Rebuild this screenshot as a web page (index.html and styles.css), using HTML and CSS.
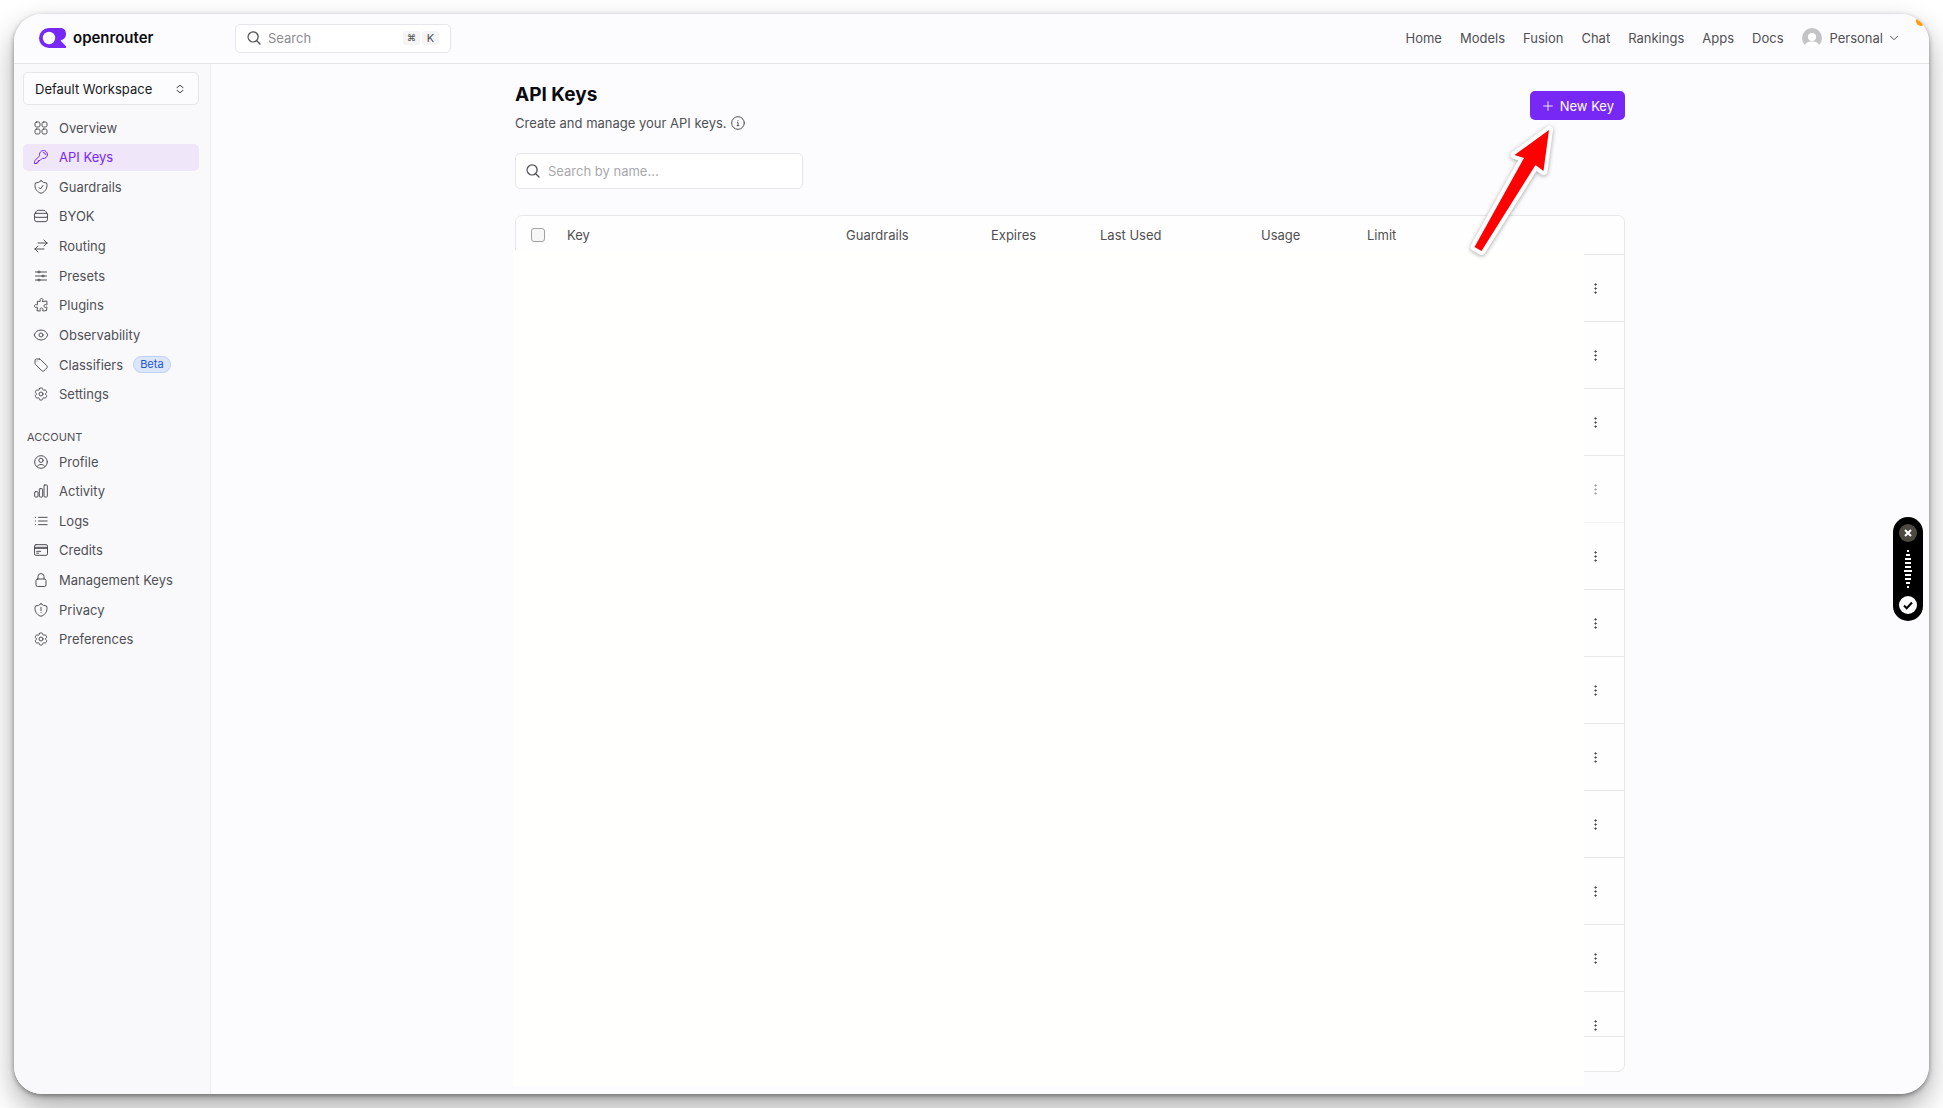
FILE: index.html
```
<!DOCTYPE html>
<html lang="en">
<head>
    <meta charset="UTF-8">
    <meta name="viewport" content="width=device-width, initial-scale=1.0">
    <title>API Keys | OpenRouter</title>
    <link rel="stylesheet" href="styles.css">
</head>
<body>
    <svg class="sprite" aria-hidden="true">
        <symbol id="i-search" viewBox="0 0 24 24"><path d="m21 21-5.2-5.2m0 0A7.5 7.5 0 1 0 5.2 5.2a7.5 7.5 0 0 0 10.6 10.6Z"/></symbol>
        <symbol id="i-grid" viewBox="0 0 24 24"><rect x="3" y="3" width="7.5" height="7.5" rx="2.5"/><rect x="13.5" y="3" width="7.5" height="7.5" rx="2.5"/><rect x="3" y="13.5" width="7.5" height="7.5" rx="2.5"/><rect x="13.5" y="13.5" width="7.5" height="7.5" rx="2.5"/></symbol>
        <symbol id="i-key" viewBox="0 0 24 24"><path d="M15.75 5.25a3 3 0 0 1 3 3m3 0a6 6 0 0 1-7.029 5.912c-.563-.097-1.159.026-1.563.43L10.5 17.25H8.25v2.25H6v2.25H2.25v-2.818c0-.597.237-1.17.659-1.591l6.499-6.499c.404-.404.527-1 .43-1.563A6 6 0 1 1 21.75 8.25Z"/></symbol>
        <symbol id="i-shield-check" viewBox="0 0 24 24"><path d="M9 12.75 11.25 15 15 9.75M12 2.7A12 12 0 0 1 3.6 6 12 12 0 0 0 3 9.75c0 5.6 3.8 10.3 9 11.6 5.2-1.3 9-6 9-11.6 0-1.3-.2-2.6-.6-3.75h-.15A12 12 0 0 1 12 2.7Z"/></symbol>
        <symbol id="i-shield-alert" viewBox="0 0 24 24"><path d="M12 8v5m0 2.7v.1M12 2.7A12 12 0 0 1 3.6 6 12 12 0 0 0 3 9.75c0 5.6 3.8 10.3 9 11.6 5.2-1.3 9-6 9-11.6 0-1.3-.2-2.6-.6-3.75h-.15A12 12 0 0 1 12 2.7Z"/></symbol>
        <symbol id="i-stack" viewBox="0 0 24 24"><path d="M2.300 9.500 4.500 5.500A4 4 0 0 1 8 3.500h8a4 4 0 0 1 3.500 2l2.200 4M4.500 8h15a2.300 2.300 0 0 1 2.300 2.300v1.400A2.300 2.300 0 0 1 19.500 14h-15a2.300 2.300 0 0 1-2.300-2.300v-1.400A2.300 2.300 0 0 1 4.500 8ZM2.300 12v5A3.500 3.500 0 0 0 5.800 20.500h12.400a3.500 3.500 0 0 0 3.500-3.500v-5"/></symbol>
        <symbol id="i-swap" viewBox="0 0 24 24"><path d="M7.5 21 3 16.5m0 0L7.5 12M3 16.5h13.5m0-13.5L21 7.5m0 0L16.5 12M21 7.5H7.5"/></symbol>
        <symbol id="i-sliders" viewBox="0 0 24 24"><path d="M10.5 6h9.75M10.5 6a1.5 1.5 0 1 1-3 0m3 0a1.5 1.5 0 1 0-3 0M3.75 6H7.5m3 12h9.75m-9.75 0a1.5 1.5 0 0 1-3 0m3 0a1.5 1.5 0 0 0-3 0m-3.75 0H7.5m9-6h3.75m-3.75 0a1.5 1.5 0 0 1-3 0m3 0a1.5 1.5 0 0 0-3 0m-9.75 0h9.75"/></symbol>
        <symbol id="i-puzzle" viewBox="0 0 24 24"><path d="M14.25 6.087c0-.355.186-.676.401-.959.221-.29.349-.634.349-1.003 0-1.036-1.007-1.875-2.25-1.875s-2.25.84-2.25 1.875c0 .369.128.713.349 1.003.215.283.401.604.401.959v0a.64.64 0 0 1-.657.643 48.39 48.39 0 0 1-4.163-.3c.186 1.613.293 3.25.315 4.907a.656.656 0 0 1-.658.663v0c-.355 0-.676-.186-.959-.401a1.647 1.647 0 0 0-1.003-.349c-1.036 0-1.875 1.007-1.875 2.25s.84 2.25 1.875 2.25c.369 0 .713-.128 1.003-.349.283-.215.604-.401.959-.401v0c.31 0 .555.26.532.57a48.039 48.039 0 0 1-.642 5.056c1.518.19 3.058.309 4.616.354a.64.64 0 0 0 .657-.643v0c0-.355-.186-.676-.401-.959a1.647 1.647 0 0 1-.349-1.003c0-1.035 1.008-1.875 2.25-1.875 1.243 0 2.25.84 2.25 1.875 0 .369-.128.713-.349 1.003-.215.283-.4.604-.4.959v0c0 .333.277.599.61.58a48.1 48.1 0 0 0 5.427-.63 48.05 48.05 0 0 0 .582-4.717.532.532 0 0 0-.533-.57v0c-.355 0-.676.186-.959.401-.29.221-.634.349-1.003.349-1.035 0-1.875-1.007-1.875-2.25s.84-2.25 1.875-2.25c.37 0 .713.128 1.003.349.283.215.604.401.96.401v0a.656.656 0 0 0 .658-.663 48.422 48.422 0 0 0-.37-5.36c-1.886.342-3.81.574-5.766.689a.578.578 0 0 1-.61-.58v0Z"/></symbol>
        <symbol id="i-eye" viewBox="0 0 24 24"><path d="M2 12.3a1 1 0 0 1 0-.6C3.4 7.5 7.4 4.5 12 4.5s8.6 3 10 7.200c.1.2.1.4 0 .6-1.4 4.200-5.4 7.200-10 7.200s-8.600-3-10-7.200Z"/><circle cx="12" cy="12" r="3"/></symbol>
        <symbol id="i-tag" viewBox="0 0 24 24"><path d="M9.6 3H5.25A2.25 2.25 0 0 0 3 5.25v4.300c0 .6.2 1.200.7 1.600l9.600 9.600c.7.7 1.800.9 2.600.3a18 18 0 0 0 5.200-5.200c.6-.8.4-1.900-.3-2.600l-9.600-9.600A2.200 2.200 0 0 0 9.600 3Z"/><path d="M6 6h.01"/></symbol>
        <symbol id="i-cog" viewBox="0 0 24 24"><path d="M9.594 3.94c.09-.542.56-.94 1.11-.94h2.593c.55 0 1.02.398 1.11.94l.213 1.281c.063.374.313.686.645.87.074.04.147.083.22.127.325.196.72.257 1.075.124l1.217-.456a1.125 1.125 0 0 1 1.37.49l1.296 2.247a1.125 1.125 0 0 1-.26 1.431l-1.003.827c-.293.241-.438.613-.43.992a7.723 7.723 0 0 1 0 .255c-.008.378.137.75.43.991l1.004.827c.424.35.534.955.26 1.43l-1.298 2.247a1.125 1.125 0 0 1-1.369.491l-1.217-.456c-.355-.133-.75-.072-1.076.124a6.47 6.47 0 0 1-.22.128c-.331.183-.581.495-.644.869l-.213 1.281c-.09.543-.56.94-1.11.94h-2.594c-.55 0-1.019-.398-1.11-.94l-.213-1.281c-.062-.374-.312-.686-.644-.87a6.52 6.52 0 0 1-.22-.127c-.325-.196-.72-.257-1.076-.124l-1.217.456a1.125 1.125 0 0 1-1.369-.49l-1.297-2.247a1.125 1.125 0 0 1 .26-1.431l1.004-.827c.292-.24.437-.613.43-.991a6.932 6.932 0 0 1 0-.255c.007-.38-.138-.751-.43-.992l-1.004-.827a1.125 1.125 0 0 1-.26-1.43l1.297-2.247a1.125 1.125 0 0 1 1.37-.491l1.216.456c.356.133.751.072 1.076-.124.072-.044.146-.086.22-.128.332-.183.582-.495.644-.869l.214-1.28Z"/><circle cx="12" cy="12" r="3"/></symbol>
        <symbol id="i-user" viewBox="0 0 24 24"><circle cx="12" cy="12" r="9.5"/><circle cx="12" cy="9.5" r="3.2"/><path d="M6 18.8a7 7 0 0 1 12 0"/></symbol>
        <symbol id="i-chart" viewBox="0 0 24 24"><rect x="2.5" y="13" width="5" height="8" rx="1.2"/><rect x="9.5" y="8.5" width="5" height="12.5" rx="1.2"/><rect x="16.5" y="3" width="5" height="18" rx="1.2"/></symbol>
        <symbol id="i-list" viewBox="0 0 24 24"><path d="M8.25 6.5h13M8.25 12h13m-13 5.5h13M3.5 6.5h.5M3.5 12h.5m-.5 5.5h.5"/></symbol>
        <symbol id="i-card" viewBox="0 0 24 24"><rect x="2.25" y="4" width="19.5" height="16" rx="2.25"/><path d="M2.25 8h19.5M2.25 9.5h19.5M5.5 14h6m-6 2.7h3"/></symbol>
        <symbol id="i-lock" viewBox="0 0 24 24"><rect x="4.5" y="10.5" width="15" height="11.2" rx="2.25"/><path d="M7.5 10.5V6.75a4.5 4.5 0 0 1 9 0v3.75"/></symbol>
        <symbol id="i-info" viewBox="0 0 24 24"><circle cx="12" cy="12" r="9.5"/><path d="M11 11h1v5m-1.3 0h2.6M12 8v.1"/></symbol>
        <symbol id="i-plus" viewBox="0 0 24 24"><path d="M12 4.5v15m7.5-7.5h-15"/></symbol>
        <symbol id="i-down" viewBox="0 0 24 24"><path d="m5 8.500 7 7 7-7"/></symbol>
        <symbol id="i-updown" viewBox="0 0 24 24"><path d="M5 9V8.5L12 3l7 5.500V9M5 15v.5l7 5.500 7-5.500V15"/></symbol>
        <symbol id="i-dots" viewBox="0 0 24 24"><circle cx="12" cy="5.5" r="1.2"/><circle cx="12" cy="12" r="1.2"/><circle cx="12" cy="18.5" r="1.2"/></symbol>
    </svg>

    <div class="window">
        <header class="topbar">
            <a class="logo" href="#">
                <svg class="logo-mark" viewBox="0 0 27 20" aria-hidden="true">
                    <path d="M10 0H21.5C25 0 27 2.5 27 6.2C27 9.500 25 11.5 21.5 12.5L27 18.2V20H10A10 10 0 0 1 10 0Z" fill="#7728f5"/>
                    <circle cx="10" cy="10" r="6.2" fill="#fcfcff"/>
                </svg>
                <span class="logo-text">openrouter</span>
            </a>
            <label class="search top-search">
                <svg class="icon"><use href="#i-search"/></svg>
                <input type="search" placeholder="Search" aria-label="Search">
                <kbd class="mac">⌘</kbd><kbd>K</kbd>
            </label>
            <nav class="top-nav">
                <a href="#">Home</a>
                <a href="#">Models</a>
                <a href="#">Fusion</a>
                <a href="#">Chat</a>
                <a href="#">Rankings</a>
                <a href="#">Apps</a>
                <a href="#">Docs</a>
            </nav>
            <button class="account">
                <svg class="avatar" viewBox="0 0 20 20" aria-hidden="true">
                    <circle cx="10" cy="10" r="10" fill="#c4c4c6"/>
                    <circle cx="10" cy="9" r="4" fill="#fff"/>
                    <path d="M3 17.2C4 14 7 13.5 10 13.5s6 .5 7 3.700A10 10 0 0 1 3 17.200Z" fill="#fff"/>
                </svg>
                Personal
                <svg class="icon chevron"><use href="#i-down"/></svg>
            </button>
        </header>

        <div class="body">
            <aside class="sidebar">
                <button class="workspace">Default Workspace <svg class="icon"><use href="#i-updown"/></svg></button>
                <nav class="side-nav main-nav">
                    <a href="#"><svg class="icon"><use href="#i-grid"/></svg>Overview</a>
                    <a href="#" class="active"><svg class="icon"><use href="#i-key"/></svg>API Keys</a>
                    <a href="#"><svg class="icon"><use href="#i-shield-check"/></svg>Guardrails</a>
                    <a href="#"><svg class="icon"><use href="#i-stack"/></svg>BYOK</a>
                    <a href="#"><svg class="icon"><use href="#i-swap"/></svg>Routing</a>
                    <a href="#"><svg class="icon"><use href="#i-sliders"/></svg>Presets</a>
                    <a href="#"><svg class="icon"><use href="#i-puzzle"/></svg>Plugins</a>
                    <a href="#"><svg class="icon"><use href="#i-eye"/></svg>Observability</a>
                    <a href="#"><svg class="icon"><use href="#i-tag"/></svg>Classifiers <span class="badge">Beta</span></a>
                    <a href="#"><svg class="icon"><use href="#i-cog"/></svg>Settings</a>
                </nav>
                <h2 class="side-title">ACCOUNT</h2>
                <nav class="side-nav account-nav">
                    <a href="#"><svg class="icon"><use href="#i-user"/></svg>Profile</a>
                    <a href="#"><svg class="icon"><use href="#i-chart"/></svg>Activity</a>
                    <a href="#"><svg class="icon"><use href="#i-list"/></svg>Logs</a>
                    <a href="#"><svg class="icon"><use href="#i-card"/></svg>Credits</a>
                    <a href="#"><svg class="icon"><use href="#i-lock"/></svg>Management Keys</a>
                    <a href="#"><svg class="icon"><use href="#i-shield-alert"/></svg>Privacy</a>
                    <a href="#"><svg class="icon"><use href="#i-cog"/></svg>Preferences</a>
                </nav>
            </aside>

            <main class="content">
                <div class="page-head">
                    <div>
                        <h1>API Keys</h1>
                        <p class="subtitle">Create and manage your API keys. <svg class="icon"><use href="#i-info"/></svg></p>
                    </div>
                    <button class="new-key"><svg class="icon"><use href="#i-plus"/></svg>New Key</button>
                </div>
                <label class="search name-search">
                    <svg class="icon"><use href="#i-search"/></svg>
                    <input type="search" placeholder="Search by name..." aria-label="Search by name">
                </label>
                <div class="table-area">
                    <div class="card">
                        <div class="table-wrap">
                            <table>
                                <colgroup>
                                    <col class="c-check"><col class="c-key"><col class="c-guard"><col class="c-expires">
                                    <col class="c-last"><col class="c-usage"><col><col class="c-menu">
                                </colgroup>
                                <thead>
                                    <tr>
                                        <th class="check"><input type="checkbox" aria-label="Select all"></th>
                                        <th>Key</th>
                                        <th>Guardrails</th>
                                        <th>Expires</th>
                                        <th>Last Used</th>
                                        <th>Usage</th>
                                        <th>Limit</th>
                                        <th></th>
                                    </tr>
                                </thead>
                                <tbody>
                                    <tr><td colspan="7"></td><td class="menu"><button aria-label="Key menu"><svg class="icon"><use href="#i-dots"/></svg></button></td></tr>
                                    <tr><td colspan="7"></td><td class="menu"><button aria-label="Key menu"><svg class="icon"><use href="#i-dots"/></svg></button></td></tr>
                                    <tr><td colspan="7"></td><td class="menu"><button aria-label="Key menu"><svg class="icon"><use href="#i-dots"/></svg></button></td></tr>
                                    <tr class="disabled"><td colspan="7"></td><td class="menu"><button aria-label="Key menu"><svg class="icon"><use href="#i-dots"/></svg></button></td></tr>
                                    <tr><td colspan="7"></td><td class="menu"><button aria-label="Key menu"><svg class="icon"><use href="#i-dots"/></svg></button></td></tr>
                                    <tr><td colspan="7"></td><td class="menu"><button aria-label="Key menu"><svg class="icon"><use href="#i-dots"/></svg></button></td></tr>
                                    <tr><td colspan="7"></td><td class="menu"><button aria-label="Key menu"><svg class="icon"><use href="#i-dots"/></svg></button></td></tr>
                                    <tr><td colspan="7"></td><td class="menu"><button aria-label="Key menu"><svg class="icon"><use href="#i-dots"/></svg></button></td></tr>
                                    <tr><td colspan="7"></td><td class="menu"><button aria-label="Key menu"><svg class="icon"><use href="#i-dots"/></svg></button></td></tr>
                                    <tr><td colspan="7"></td><td class="menu"><button aria-label="Key menu"><svg class="icon"><use href="#i-dots"/></svg></button></td></tr>
                                    <tr><td colspan="7"></td><td class="menu"><button aria-label="Key menu"><svg class="icon"><use href="#i-dots"/></svg></button></td></tr>
                                    <tr><td colspan="7"></td><td class="menu"><button aria-label="Key menu"><svg class="icon"><use href="#i-dots"/></svg></button></td></tr>
                                </tbody>
                            </table>
                        </div>
                        <div class="card-footer"></div>
                    </div>
                    <div class="redaction"></div>
                </div>
                <!-- arrow pointing at the New Key button -->
                <svg class="arrow" viewBox="0 0 90 136" aria-hidden="true">
                    <path d="M81 10 46.5 35 56 38 6.500 127 13.5 131 67.5 45 75.5 51Z"/>
                </svg>
            </main>
        </div>

        <span class="corner-dot"></span>

        <!-- voice recorder -->
        <div class="recorder">
            <button class="rec-cancel" aria-label="Cancel"><svg viewBox="0 0 18 18"><path d="m6 6 6 6m0-6-6 6"/></svg></button>
            <svg class="wave" viewBox="0 0 8 38" aria-hidden="true">
                <path d="M3 1h2M2 5h4M1 9h6M1 13h6M1 17h6M0 21h8M1 25h6M1 29h6M2 33h4M3 37h2"/>
            </svg>
            <button class="rec-accept" aria-label="Accept"><svg viewBox="0 0 18 18"><path d="m5 9.5 2.7 2.7L13 6.500"/></svg></button>
        </div>
    </div>
</body>
</html>
```

FILE: styles.css
```
* {
    box-sizing: border-box;
}

body {
    margin: 0;
    padding: 14px;
    height: 100vh;
    overflow: hidden;
    background: #fff;
    color: #505054;
    font-family: Inter, "Liberation Sans", sans-serif;
    font-size: 13px;
    line-height: 20px;
}

a {
    color: inherit;
    text-decoration: none;
}

button, input {
    font: inherit;
    color: inherit;
}

button {
    border: none;
    background: none;
    padding: 0;
    cursor: pointer;
}

.sprite {
    position: absolute;
    width: 0;
    height: 0;
}

.icon {
    width: 16px;
    height: 16px;
    flex: none;
    fill: none;
    stroke: currentColor;
    stroke-width: 1.5;
    stroke-linecap: round;
    stroke-linejoin: round;
}

.window {
    position: relative;
    height: 100%;
    display: flex;
    flex-direction: column;
    overflow: hidden;
    background: #fcfcff;
    border-radius: 28px;
}

body::before {
    content: "";
    position: absolute;
    inset: 14px;
    border-radius: 28px;
    box-shadow: 0 2px 5px rgba(0, 0, 0, 0.4), 0 14px 30px rgba(0, 0, 0, 0.33);
}

/* top bar */
.topbar {
    display: flex;
    align-items: center;
    flex: none;
    height: 50px;
    padding: 0 29px 1px 25px;
    border-bottom: 1px solid #e6e6ea;
}

.logo {
    display: flex;
    align-items: center;
    gap: 7px;
    width: 196px;
}

.logo-mark {
    width: 27px;
    height: 20px;
}

.logo-text {
    color: #0c0c10;
    font-size: 15px;
    font-weight: 600;
}

.search {
    display: flex;
    align-items: center;
    background: #fff;
    border: 1px solid #e6e6ea;
    border-radius: 5px;
}

.search .icon {
    stroke-width: 2;
}

.search input {
    flex: 1;
    min-width: 0;
    padding: 0;
    border: none;
    outline: none;
    background: none;
}

.search input::placeholder {
    color: #8c8c90;
}

.top-search {
    width: 216px;
    height: 29px;
    padding: 0 11px 0 10px;
    gap: 6px;
}

.top-search kbd {
    width: 17px;
    height: 14px;
    border-radius: 3px;
    background: #f5f5f6;
    font-family: inherit;
    font-size: 11px;
    line-height: 14px;
    text-align: center;
}

.top-search .mac {
    margin-right: -4px;
    font-size: 9px;
}

.top-nav {
    display: flex;
    gap: 18px;
    margin-left: auto;
}

.account {
    display: flex;
    align-items: center;
    gap: 8px;
    margin-left: 18px;
}

.avatar {
    width: 20px;
    height: 20px;
}

.chevron {
    width: 12px;
    height: 12px;
    margin-left: -3px;
    stroke-width: 2;
}

.body {
    display: flex;
    flex: 1;
    min-height: 0;
}

/* sidebar */
.sidebar {
    flex: none;
    width: 197px;
    padding: 8px 11px 0 9px;
    background: #f9f9fc;
    border-right: 1px solid #ececf0;
}

.workspace {
    display: flex;
    align-items: center;
    justify-content: space-between;
    width: 100%;
    height: 33px;
    padding: 0 13px 0 11px;
    border: 1px solid #e6e6ea;
    border-radius: 5px;
    background: #fcfcff;
    color: #18181c;
}

.workspace .icon {
    width: 10px;
    height: 10px;
    stroke-width: 2;
}

.side-nav {
    display: flex;
    flex-direction: column;
    justify-content: space-between;
}

.main-nav {
    height: 294px;
    margin-top: 9px;
}

.account-nav {
    height: 205px;
}

.side-nav a {
    display: flex;
    align-items: center;
    gap: 10px;
    height: 27px;
    padding-left: 10px;
    border-radius: 5px;
}

.side-nav .active {
    background: #efe6fa;
    color: #7728f5;
}

.badge {
    padding: 0 6px;
    border: 1px solid #bfd0f8;
    border-radius: 9px;
    background: #dbe6fb;
    color: #1f55cc;
    font-size: 11px;
    line-height: 15px;
}

.side-title {
    margin: 19px 0 1px 4px;
    font-size: 11px;
    font-weight: 400;
}

/* page */
.content {
    position: relative;
    display: flex;
    flex-direction: column;
    width: 100%;
    max-width: 1110px;
    margin: 0 auto;
    padding: 19px 0 22px;
}

.page-head {
    display: flex;
    align-items: flex-start;
    justify-content: space-between;
}

h1 {
    margin: 0;
    color: #0c0c10;
    font-size: 19px;
    line-height: 24px;
    font-weight: 700;
}

.subtitle {
    display: flex;
    align-items: center;
    gap: 3px;
    margin: 6px 0 0;
}

.new-key {
    display: flex;
    align-items: center;
    gap: 5px;
    height: 29px;
    margin-top: 8px;
    padding: 0 11px;
    border-radius: 5px;
    background: #7728f5;
    color: #fff;
}

.new-key .icon {
    width: 14px;
    height: 14px;
}

.name-search {
    width: 288px;
    height: 36px;
    margin-top: 20px;
    padding: 0 10px 0 9px;
    gap: 7px;
    flex: none;
}

.name-search input::placeholder {
    color: #a9a9ad;
}

.table-area {
    position: relative;
    flex: 1;
    min-height: 0;
    margin-top: 26px;
}

.card {
    display: flex;
    flex-direction: column;
    height: 100%;
    overflow: hidden;
    border: 1px solid #e8e8ea;
    border-radius: 7px;
    background: #fefefe;
}

.table-wrap {
    flex: 1;
    min-height: 0;
    overflow: hidden;
}

.card-footer {
    flex: none;
    height: 35px;
    border-top: 1px solid #e8e8ea;
}

table {
    width: 100%;
    table-layout: fixed;
    border-collapse: separate;
    border-spacing: 0;
}

.c-check { width: 39px; }
.c-key { width: 279px; }
.c-guard { width: 145px; }
.c-expires { width: 109px; }
.c-last { width: 161px; }
.c-usage { width: 106px; }
.c-menu { width: 58px; }

th {
    height: 39px;
    padding: 0 12px;
    border-bottom: 1px solid #e8e8ea;
    font-weight: 400;
    text-align: left;
}

td {
    height: 67px;
    padding: 0;
    border-bottom: 1px solid #e8e8ea;
}

th.check {
    padding: 0 0 0 15px;
}

.check input {
    display: block;
    appearance: none;
    width: 14px;
    height: 14px;
    margin: 0;
    border: 1px solid #a2a2a4;
    border-radius: 3px;
    background: #f7f7f8;
}

.menu button {
    display: block;
    margin: 0 auto;
}

.menu .icon {
    display: block;
    width: 15px;
    height: 15px;
    fill: currentColor;
}

.disabled td {
    border-color: #f3f3f4;
}

.disabled .icon {
    opacity: 0.5;
}

/* blanks out the key details */
.redaction {
    position: absolute;
    top: 35px;
    right: 41px;
    bottom: -14px;
    left: -2px;
    background: #fffffd;
}

.arrow {
    position: absolute;
    top: 56px;
    right: 67px;
    width: 90px;
    height: 136px;
    overflow: visible;
    fill: #f00;
    stroke: #fff;
    stroke-width: 8;
    stroke-linejoin: round;
    paint-order: stroke;
    filter: drop-shadow(0 1px 2px rgba(0, 0, 0, 0.35));
}

.corner-dot {
    position: absolute;
    top: 2px;
    right: 3px;
    width: 10px;
    height: 10px;
    border-radius: 50%;
    background: #ff9d0a;
}

.recorder {
    position: absolute;
    top: 503px;
    right: 6px;
    display: flex;
    flex-direction: column;
    align-items: center;
    justify-content: space-between;
    width: 30px;
    height: 104px;
    padding: 7px 6px;
    border-radius: 15px;
    background: #000;
}

.recorder button {
    width: 18px;
    height: 18px;
    border-radius: 50%;
}

.recorder svg {
    display: block;
    fill: none;
    stroke: #fff;
    stroke-width: 2;
}

.rec-cancel {
    background: #4b4941;
}

.rec-accept {
    background: #fff;
}

.recorder .rec-accept svg {
    stroke: #000;
}

.wave {
    width: 8px;
    height: 38px;
}
```
